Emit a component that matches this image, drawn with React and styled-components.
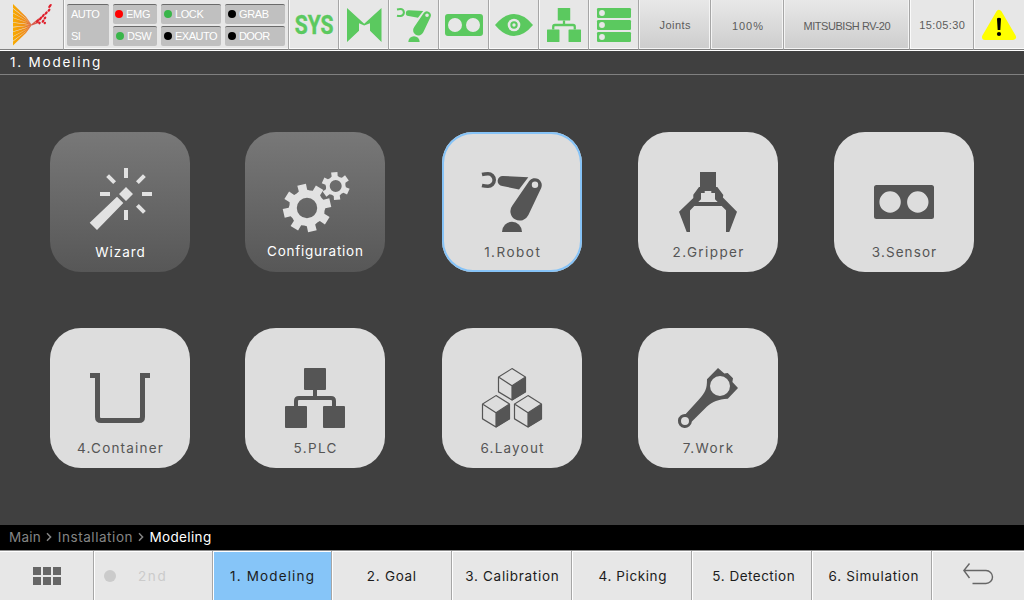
import React from "react";
import styled, { createGlobalStyle, css } from "styled-components";

const GlobalStyle = createGlobalStyle`
  *, *::before, *::after { box-sizing: border-box; }
  body {
    margin: 0;
    background: #404040;
    font-family: "Liberation Sans", Arial, sans-serif;
  }
  svg { display: block; overflow: visible; flex: none; }
`;

const Screen = styled.div`
  width: 1024px;
  height: 600px;
  display: flex;
  flex-direction: column;
  background: #404040;
  overflow: hidden;
`;

const Text = styled.span`
  font-size: ${(p) => p.$size || 14}px;
  line-height: 16px;
  letter-spacing: ${(p) => p.$track || 0}px;
  margin-right: ${(p) => -(p.$track || 0)}px;
  color: ${(p) => p.$color || "inherit"};
  white-space: nowrap;
`;

const Label = styled(Text)`
  font-family: Inter, "Liberation Sans", sans-serif;
  font-size: 13.5px;
`;

/* ---------- header ---------- */

const Header = styled.header`
  display: flex;
  flex: none;
  height: 51px;
  background: #e7e7e7;
  border-bottom: 1px solid #fff;
`;

const HeaderCell = styled.div`
  width: ${(p) => p.$w}px;
  height: 50px;
  display: flex;
  align-items: center;
  justify-content: center;
  padding-top: ${(p) => p.$drop || 0}px;
  padding-left: ${(p) => p.$shift || 0}px;
  color: #5c5c5c;
  border-bottom: 1px solid #808080;
  border-right: 1px solid #a6a6a6;
  box-shadow: inset 1px -1px 0 #fafafa;
  &:first-child { box-shadow: none; }
  &:last-child { border-right: 0; }
  ${(p) =>
    p.$raised &&
    css`
      background: linear-gradient(#e8e8e8, #cdcdcd);
      box-shadow: inset 1px -1px 0 #f4f4f4, inset -1px 0 0 #f4f4f4;
    `}
`;

const StatusPanel = styled(HeaderCell)`
  align-items: flex-start;
  justify-content: flex-start;
  padding: 4px 3px 0;
  gap: 4px;
`;

const StatusColumn = styled.div`
  width: ${(p) => p.$w}px;
  display: flex;
  flex-direction: column;
  gap: 2px;
`;

const StatusBox = styled.div`
  height: 20px;
  display: flex;
  align-items: center;
  gap: 3px;
  padding: 0 0 1px ${(p) => p.$pad}px;
  background: #c0c0c0;
  border-top: 1px solid #6a6a6a;
  border-radius: 2px;
`;

const ModeBox = styled.div`
  width: 42px;
  height: 42px;
  display: flex;
  flex-direction: column;
  justify-content: space-between;
  align-items: flex-start;
  padding: 1px 0 2px 4px;
  background: #c0c0c0;
  border-top: 1px solid #6a6a6a;
  border-radius: 2px;
`;

const Dot = styled.i`
  width: 8px;
  height: 8px;
  border-radius: 50%;
  background: ${(p) => p.$color};
`;

const TitleBar = styled.div`
  flex: none;
  height: 24px;
  padding: 3px 0 0 10px;
  display: flex;
  align-items: flex-start;
  color: #fff;
  border-bottom: 1px solid #808080;
`;

/* ---------- tiles ---------- */

const TileArea = styled.main`
  flex: 1;
  display: grid;
  grid-template-columns: 195px 197px 196px 196px 140px;
  grid-auto-rows: 196px;
  padding: 57px 50px 0;
`;

const Tile = styled.div`
  width: 140px;
  height: 140px;
  border-radius: 31px;
  display: flex;
  flex-direction: column;
  align-items: center;
  padding-top: 40px;
  gap: ${(p) => 12 - (p.$lift || 0)}px;
  color: #555;
  background: #ddd;
  ${(p) =>
    p.$dark &&
    css`
      color: #e2e2e2;
      background: linear-gradient(#787878, #575757);
    `}
  ${(p) => p.$selected && css`box-shadow: inset 0 0 0 2px #86c3f7;`}
`;

/* ---------- bottom ---------- */

const Breadcrumb = styled.nav`
  flex: none;
  height: 25px;
  display: flex;
  align-items: center;
  padding: 0 0 1px 9px;
  background: #000;
  color: #858585;
`;

const Chevron = styled.svg`
  margin: 0 6px 0 5px;
`;

const Footer = styled.footer`
  flex: none;
  display: flex;
  height: 50px;
  border-top: 1px solid #8a8a8a;
  background: #e7e7e7;
`;

const FooterCell = styled.div`
  width: ${(p) => p.$w}px;
  display: flex;
  align-items: center;
  justify-content: center;
  padding-left: ${(p) => p.$shift || 0}px;
  padding-bottom: ${(p) => p.$lift || 0}px;
  color: #1c1c1c;
  background: ${(p) => (p.$active ? "#86c5f8" : "transparent")};
  border-right: 1px solid #a6a6a6;
  box-shadow: inset 1px 1px 0 #fff;
  &:first-child { box-shadow: inset 0 1px 0 #fff; }
  &:last-child { border-right: 0; }
`;

const SecondCell = styled(FooterCell)`
  justify-content: flex-start;
  padding-left: 10px;
  gap: 22px;
`;

const BigDot = styled.i`
  width: 12px;
  height: 12px;
  border-radius: 50%;
  background: #cbcbcb;
`;

/* ---------- icons ---------- */

const GREEN = "#5bc95f";

const Icon = ({ size = 60, w, h, box = "0 0 60 60", color = "currentColor", children }) => (
  <svg width={w || size} height={h || size} viewBox={box} fill={color} color={color}>
    {children}
  </svg>
);

const RobotIcon = (p) => (
  <Icon {...p}>
    <path d="M0 2.5Q3 1.8 6 1.8A6.1 6.1 0 0 1 6 14.2Q3 14.2 0 13.5" fill="none" stroke="currentColor" strokeWidth="3.6" />
    <path d="M21 4L46.3 5.2L37 17.4L20.3 14A5 5 0 0 1 21 4Z" />
    <path
      fillRule="evenodd"
      d="M47.2 8.9A7 7 0 0 1 59.2 15.9L46.4 43A9.4 9.4 0 1 1 30.4 33.4ZM53 9.5A3.2 3.2 0 1 0 53 15.9A3.2 3.2 0 1 0 53 9.5Z"
    />
    <path d="M20 60A10 10.3 0 0 1 40 60Z" />
  </Icon>
);

const GripperIcon = () => (
  <Icon>
    <path
      fillRule="evenodd"
      d="M22 0H38V15H39.3L45.3 23L44.9 25.5L59 39.7L51.3 60H48V38.3L43.7 34H16.3L12 38.5V60H8.7L1 39.7L15.3 26V22.7L21 15H22ZM23 21V27.3L20.3 30H39.7L37 27.3V21H33.3V19H26.7V21Z"
    />
  </Icon>
);

const SensorIcon = () => (
  <Icon>
    <path
      fillRule="evenodd"
      d="M2.5 13H57.5Q60 13 60 15.5V44.5Q60 47 57.5 47H2.5Q0 47 0 44.5V15.5Q0 13 2.5 13ZM5.4 30A10.7 10.7 0 1 0 26.8 30A10.7 10.7 0 1 0 5.4 30ZM33.1 30A10.7 10.7 0 1 0 54.5 30A10.7 10.7 0 1 0 33.1 30Z"
    />
  </Icon>
);

const WizardIcon = () => (
  <Icon>
    <path d="M34-4H38V6H34ZM34 38H38V48H34ZM10 20H20V24H10ZM52 20H62V24H52Z" />
    <path d="M17.6 3.6L24.6 10.6M54.4 3.6L47.4 10.6M47.4 33.4L54.4 40.4" stroke="currentColor" strokeWidth="4" />
    <path d="M36 15L43 22L36 29L29 22ZM27 24.7L33.3 31L7 58L-.3 50.7Z" />
  </Icon>
);

function gearPath(cx, cy, outer, root, hole, teeth, startDeg, toothTop, toothBase) {
  const pts = [];
  const at = (r, deg) => {
    const a = (deg * Math.PI) / 180;
    return `${(cx + r * Math.cos(a)).toFixed(2)} ${(cy + r * Math.sin(a)).toFixed(2)}`;
  };
  const step = 360 / teeth;
  for (let i = 0; i < teeth; i += 1) {
    const a = startDeg + i * step;
    pts.push(at(root, a - toothBase), at(outer, a - toothTop), at(outer, a + toothTop), at(root, a + toothBase));
    pts.push(at(root - 0.6, a + step / 2));
  }
  return `M${pts.join("L")}ZM${cx - hole} ${cy}a${hole} ${hole} 0 1 0 ${hole * 2} 0a${hole} ${hole} 0 1 0 ${-hole * 2} 0Z`;
}

const GearsIcon = () => (
  <Icon>
    <path fillRule="evenodd" d={gearPath(22, 36, 24.3, 18.3, 10.2, 8, -103, 10.5, 13.5)} />
    <path fillRule="evenodd" d={gearPath(50.7, 14, 14.2, 10.3, 6, 6, -96, 13, 17)} />
  </Icon>
);

const ContainerIcon = () => (
  <Icon>
    <path d="M0 7.5H7.5V49Q7.5 52.5 11 52.5H49Q52.5 52.5 52.5 49V7.5H60" fill="none" stroke="currentColor" strokeWidth="5" />
  </Icon>
);

const NetworkIcon = (p) => (
  <Icon {...p}>
    <rect x="19" width="22" height="22" rx="1" />
    <rect y="38" width="22" height="22" rx="1" />
    <rect x="38" y="38" width="22" height="22" rx="1" />
    <path d="M30 22V30M11 38V33Q11 30 14 30H46Q49 30 49 33V38" fill="none" stroke="currentColor" strokeWidth="4" />
  </Icon>
);

const Cube = ({ x, y }) => (
  <g transform={`translate(${x} ${y})`}>
    <path d="M0 .6L13.5 9V23.8L0 32L-13.5 23.8V9ZM-13.5 9L0 17.8L13.5 9M0 17.8V32" fill="none" stroke="currentColor" strokeWidth="1.2" />
    <path d="M0 17.8L13.8 9V24L0 32.4Z" />
  </g>
);

const LayoutIcon = () => (
  <Icon>
    <Cube x={30} y={0} />
    <Cube x={14} y={27} />
    <Cube x={46} y={27} />
  </Icon>
);

const WorkIcon = () => (
  <Icon>
    <path
      fillRule="evenodd"
      d="M40 0L46.3 5.6L49.7 5L55 10.3L54.4 14L60 20L49.8 30.7C40 31.3 35 33.5 29 38.5L13.9 53.6A7 7 0 1 1 7.7 46L20.5 32C27.5 24 29 21 29 11.3ZM32 18A10 10 0 1 0 52 18A10 10 0 1 0 32 18ZM3 53A4 4 0 1 0 11 53A4 4 0 1 0 3 53Z"
    />
  </Icon>
);

const BowIcon = () => (
  <Icon w={35} h={34} box="0 0 35 34" color={GREEN}>
    <path d="M0 0L17.2 15.8L34.5 0V34L23 22.7V15.3L17.2 17.4L12 15.3V22.7L0 34Z" />
  </Icon>
);

const StereoIcon = () => (
  <Icon w={38} h={22} box="0 0 38 22" color={GREEN}>
    <rect width="38" height="22" rx="3" />
    <circle cx="10" cy="11" r="7" fill="#e7e7e7" />
    <circle cx="28" cy="11" r="7" fill="#e7e7e7" />
  </Icon>
);

const EyeIcon = () => (
  <Icon w={38} h={22} box="0 0 38 22" color={GREEN}>
    <path d="M0 11Q9 0 19 0T38 11Q29 22 19 22T0 11Z" />
    <circle cx="19" cy="11" r="6.3" fill="#e7e7e7" />
    <circle cx="19" cy="11" r="2.7" fill="none" stroke="currentColor" strokeWidth="2" />
  </Icon>
);

const ServerIcon = () => (
  <Icon w={34} h={34} box="0 0 34 34" color={GREEN}>
    {[0, 12, 24].map((y) => (
      <g key={y}>
        <rect y={y} width="34" height="10" rx="1.2" />
        <circle cx="5" cy={y + 5} r="2.9" fill="#e7e7e7" />
      </g>
    ))}
  </Icon>
);

const SysIcon = () => (
  <svg width="40" height="24" viewBox="0 0 40 24">
    <text x="0.7" y="21" fontFamily="Roboto" fontWeight="700" fontSize="25" textLength="38.8" lengthAdjust="spacingAndGlyphs" fill={GREEN} stroke={GREEN} strokeWidth="0.4">
      SYS
    </text>
  </svg>
);

const WarningIcon = () => (
  <svg width="34" height="30" viewBox="0 0 34 30">
    <path d="M17 3L31 27H3Z" fill="#ff0" stroke="#ff0" strokeWidth="6" strokeLinejoin="round" />
    <path d="M15 8.5Q17 7 19 8.5L18.3 20H15.7Z" />
    <circle cx="17" cy="24" r="2.1" />
  </svg>
);

const Logo = () => {
  const rays = Array.from({ length: 9 }, (_, i) => {
    const l = i * 4.68;
    const r = 12.8 + i * 1.85;
    return `M0 ${l}L13 ${r}L18.8 21L13 ${r + 1.5}L0 ${l + 4.1}Z`;
  });
  const sparks = [
    [24.5, 17.2, 2], [26.5, 19, 1.4], [27.5, 14.5, 2.2], [30, 17.2, 1.8], [30.2, 11.6, 2.2],
    [32, 14, 1.6], [33.2, 9, 2], [31.8, 19, 1.3], [36, 6.2, 1.8], [37, 2, 2.4],
  ];
  return (
    <svg width="38" height="42" viewBox="0 0 38 42">
      <defs>
        <linearGradient id="ray" gradientUnits="userSpaceOnUse" x1="0" y1="0" x2="19" y2="0">
          <stop offset="0" stopColor="#f8ac00" />
          <stop offset=".65" stopColor="#f08a18" />
          <stop offset="1" stopColor="#d84a30" />
        </linearGradient>
      </defs>
      <path d={rays.join("")} fill="url(#ray)" />
      <path d="M18.5 21L26 14.8M18.5 21L26 18.2" stroke="#d85a4c" strokeWidth="1.3" />
      {sparks.map(([x, y, r]) => (
        <ellipse key={`${x}-${y}`} cx={x} cy={y} rx={r} ry="1.15" fill="#df1f2c" transform={`rotate(-52 ${x} ${y})`} />
      ))}
    </svg>
  );
};

const GridIcon = () => (
  <svg width="28" height="18" viewBox="0 0 28 18" fill="#666">
    <path d="M0 0H8V8H0ZM10 0H18V8H10ZM20 0H28V8H20ZM0 10H8V18H0ZM10 10H18V18H10ZM20 10H28V18H20Z" />
  </svg>
);

const BackIcon = () => (
  <svg width="30" height="22" viewBox="0 0 30 22" fill="none" stroke="#666" strokeWidth="1.4">
    <path d="M6.5 .5L.9 7.5L6.5 15M.9 7.5H23A6.4 6.4 0 0 1 23 20.5H9.5" />
  </svg>
);

/* ---------- data ---------- */

const STATUS = [
  { w: 44, items: [["EMG", "#f00", 2, -0.3], ["DSW", "#39b54a", 3, -0.5]] },
  { w: 60, items: [["LOCK", "#39b54a", 3, -0.4], ["EXAUTO", "#000", 3, -0.5]] },
  { w: 60, items: [["GRAB", "#000", 3, -0.4], ["DOOR", "#000", 3, -0.6]] },
];

const TILES = [
  { label: "Wizard", track: 1.0, icon: <WizardIcon />, dark: true },
  { label: "Configuration", track: 0.75, icon: <GearsIcon />, dark: true, lift: 1 },
  { label: "1.Robot", track: 1.5, icon: <RobotIcon />, selected: true },
  { label: "2.Gripper", track: 1.4, icon: <GripperIcon /> },
  { label: "3.Sensor", track: 1.1, icon: <SensorIcon /> },
  { label: "4.Container", track: 1.2, icon: <ContainerIcon /> },
  { label: "5.PLC", track: 1.35, icon: <NetworkIcon /> },
  { label: "6.Layout", track: 1.2, icon: <LayoutIcon /> },
  { label: "7.Work", track: 1.4, icon: <WorkIcon /> },
];

const TABS = [
  { label: "1. Modeling", w: 119, track: 1.15, active: true },
  { label: "2. Goal", w: 120, track: 0.7 },
  { label: "3. Calibration", w: 120, track: 0.7, shift: 1 },
  { label: "4. Picking", w: 120, track: 0.6, shift: 2 },
  { label: "5. Detection", w: 120, track: 0.5, shift: 4 },
  { label: "6. Simulation", w: 120, track: 0.65, shift: 4 },
];

const Separator = () => (
  <Chevron width="6" height="8" viewBox="0 0 6 8" fill="none" stroke="#858585" strokeWidth="1.5">
    <path d="M1 .3L4.6 4L1 7.7" />
  </Chevron>
);

export default function App() {
  return (
    <Screen>
      <GlobalStyle />
      <Header>
        <HeaderCell $w={64}><Logo /></HeaderCell>
        <StatusPanel $w={225}>
          <ModeBox>
            <Text $size={11} $track={-0.5} $color="#fff">AUTO</Text>
            <Text $size={11} $track={-0.5} $color="#fff">SI</Text>
          </ModeBox>
          {STATUS.map((col) => (
            <StatusColumn key={col.items[0][0]} $w={col.w}>
              {col.items.map(([name, color, pad, track]) => (
                <StatusBox key={name} $pad={pad}>
                  <Dot $color={color} />
                  <Text $size={11} $track={track} $color="#fff">{name}</Text>
                </StatusBox>
              ))}
            </StatusColumn>
          ))}
        </StatusPanel>
        <HeaderCell $w={50}><SysIcon /></HeaderCell>
        <HeaderCell $w={50} $shift={1}><BowIcon /></HeaderCell>
        <HeaderCell $w={50}><RobotIcon size={34} color={GREEN} /></HeaderCell>
        <HeaderCell $w={50}><StereoIcon /></HeaderCell>
        <HeaderCell $w={50}><EyeIcon /></HeaderCell>
        <HeaderCell $w={50}><NetworkIcon size={34} color={GREEN} /></HeaderCell>
        <HeaderCell $w={50}><ServerIcon /></HeaderCell>
        <HeaderCell $w={72} $raised $drop={1} $shift={1}><Text $size={11} $track={0.5}>Joints</Text></HeaderCell>
        <HeaderCell $w={73} $raised $drop={3} $shift={1}><Text $size={11} $track={0.9}>100%</Text></HeaderCell>
        <HeaderCell $w={126} $raised $drop={3} $shift={1}><Text $size={11} $track={-0.45}>MITSUBISH RV-20</Text></HeaderCell>
        <HeaderCell $w={64} $drop={1} $shift={1}><Text $size={11} $track={0.4}>15:05:30</Text></HeaderCell>
        <HeaderCell $w={50} $drop={1}><WarningIcon /></HeaderCell>
      </Header>

      <TitleBar><Label $track={1.8}>1. Modeling</Label></TitleBar>

      <TileArea>
        {TILES.map((t) => (
          <Tile key={t.label} $dark={t.dark} $selected={t.selected} $lift={t.lift}>
            {t.icon}
            <Label $track={t.track} $color={t.dark ? "#fff" : undefined}>{t.label}</Label>
          </Tile>
        ))}
      </TileArea>

      <Breadcrumb>
        <Label $track={0.25}>Main</Label>
        <Separator />
        <Label $track={0.55}>Installation</Label>
        <Separator />
        <Label $track={0.35} $color="#fff">Modeling</Label>
      </Breadcrumb>

      <Footer>
        <FooterCell $w={94}><GridIcon /></FooterCell>
        <SecondCell $w={119}>
          <BigDot />
          <Label $track={1.6} $color="#cbcbcb">2nd</Label>
        </SecondCell>
        {TABS.map((t) => (
          <FooterCell key={t.label} $w={t.w} $active={t.active} $shift={t.shift}>
            <Label $track={t.track}>{t.label}</Label>
          </FooterCell>
        ))}
        <FooterCell $w={92} $lift={3}><BackIcon /></FooterCell>
      </Footer>
    </Screen>
  );
}
